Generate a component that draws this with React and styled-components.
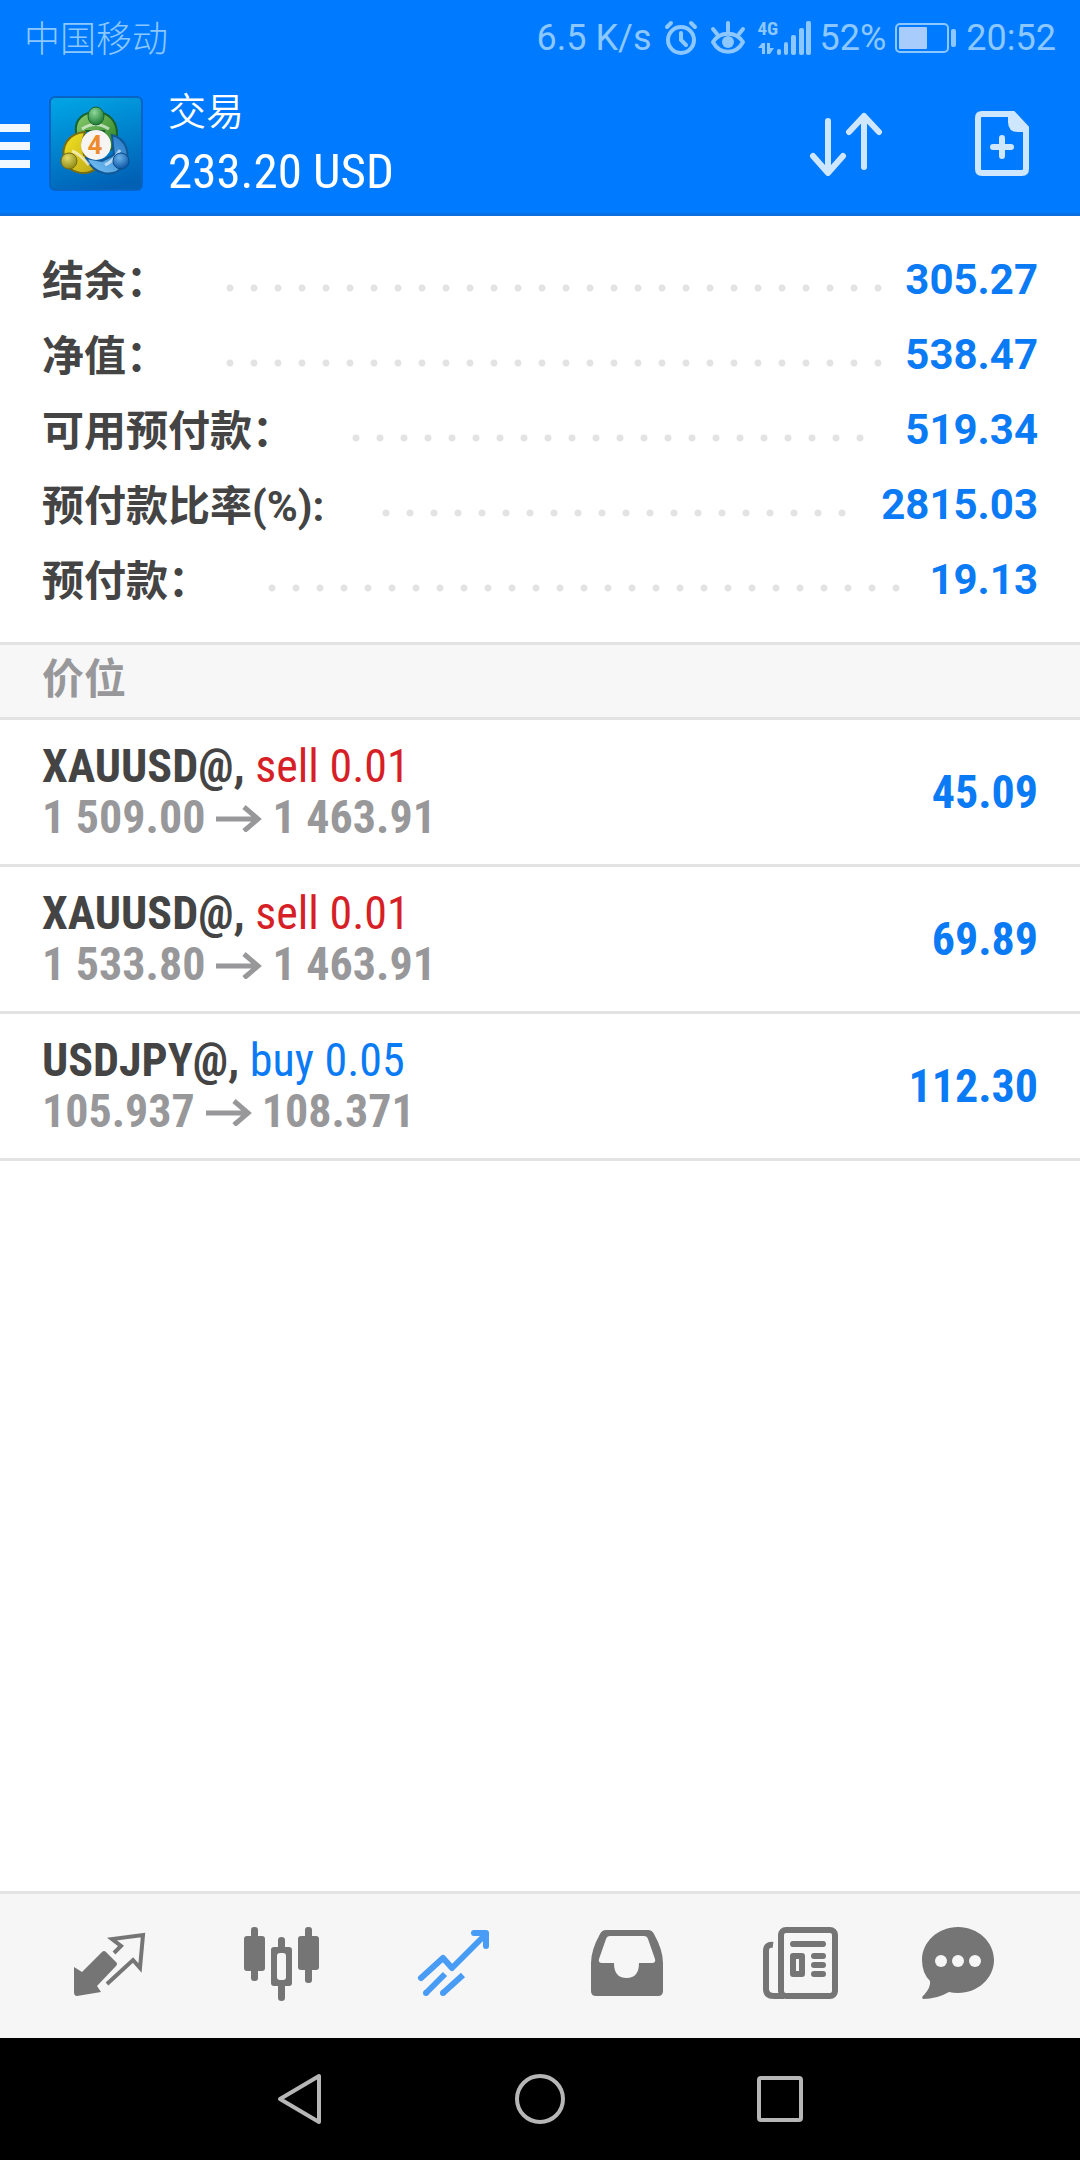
import React from "react";
import styled, { createGlobalStyle } from "styled-components";

const GlobalStyle = createGlobalStyle`
  * {
    box-sizing: border-box;
  }
  body {
    margin: 0;
    background: #fff;
    font-family: Roboto, "Noto Sans CJK SC", sans-serif;
  }
  button {
    padding: 0;
    border: 0;
    background: transparent;
    font: inherit;
    color: inherit;
    cursor: pointer;
  }
  svg {
    display: block;
    flex: none;
  }
`;

const condensed = `"Roboto Condensed", "Liberation Sans Narrow", Roboto, "Noto Sans CJK SC", sans-serif`;

const Screen = styled.div`
  display: flex;
  flex-direction: column;
  min-height: 100vh;
`;

const Header = styled.header`
  background: #007aff;
  border-bottom: 3px solid #0a6fdf;
`;

const StatusBar = styled.div`
  display: flex;
  align-items: center;
  justify-content: space-between;
  height: 72px;
  padding: 0 24px;
  color: #8cc8ff;
  font-size: 36px;
`;

const Carrier = styled.span`
  font-family: "Noto Sans CJK SC", sans-serif;
  font-size: 36px;
  font-weight: 300;
`;

const StatusItems = styled.div`
  display: flex;
  align-items: center;
  gap: 12px;
  padding-top: 3px;
`;

const Tight = styled.div`
  display: flex;
  align-items: center;
  gap: 9px;
`;

const Network = styled.div`
  display: flex;
`;

const NetworkType = styled.div`
  display: flex;
  flex-direction: column;
  justify-content: space-between;
  width: 19px;
  height: 36px;
  font-family: ${condensed};
  font-size: 19px;
  font-weight: 700;
  line-height: 18px;
`;

const TopBar = styled.div`
  display: flex;
  align-items: center;
  height: 141px;
  padding-right: 50px;
`;

const MenuButton = styled.button`
  display: flex;
  flex-direction: column;
  gap: 10px;
  width: 30px;
  margin-right: 18px;
  padding-top: 6px;
  span {
    height: 8px;
    background: #f2f8ff;
  }
`;

const Heading = styled.div`
  flex: 1;
  padding-left: 24px;
  color: #fff;
`;

const Title = styled.h1`
  margin: 0 0 6px;
  font-family: "Noto Sans CJK SC", sans-serif;
  font-size: 38px;
  font-weight: 350;
  line-height: 52px;
`;

const Profit = styled.div`
  font-family: ${condensed};
  font-size: 49px;
  line-height: 62px;
`;

const Actions = styled.div`
  display: flex;
  align-items: center;
  gap: 90px;
`;

const Summary = styled.dl`
  margin: 0;
  padding: 26px 42px 25px;
`;

const SummaryRow = styled.div`
  display: flex;
  align-items: center;
  height: 75px;
  font-size: 42px;
  font-weight: 700;
  dt {
    padding-bottom: 5px;
    color: #444;
  }
  dd {
    margin: 0;
    color: #0a7af5;
  }
`;

/* whole 24px tiles only, so that no dot is cut at the right end */
const Leader = styled.span`
  flex: 1;
  margin: 16px 12px 0 50px;
  &::before {
    content: "";
    display: block;
    width: round(down, 100%, 24px);
    height: 8px;
    background: radial-gradient(circle, #e3e3e3 3px, transparent 4px) 0 0 / 24px 8px;
  }
`;

const SectionTitle = styled.h2`
  height: 78px;
  margin: 0;
  padding: 0 42px;
  border-top: 3px solid #e3e3e3;
  border-bottom: 3px solid #e3e3e3;
  background: #f7f7f8;
  color: #98989b;
  font-size: 42px;
  font-weight: 700;
  line-height: 70px;
`;

const Positions = styled.ul`
  flex: 1;
  margin: 0;
  padding: 0;
  list-style: none;
`;

const Position = styled.li`
  display: flex;
  align-items: center;
  justify-content: space-between;
  height: 147px;
  padding: 0 42px;
  border-bottom: 3px solid #e3e3e3;
  font-family: ${condensed};
  font-size: 46px;
  font-weight: 700;
  line-height: 51px;
`;

const Symbol = styled.div`
  color: #444;
`;

const Side = styled.span`
  color: ${(props) => (props.$buy ? "#0a7af5" : "#d61f26")};
  font-weight: 400;
`;

const Prices = styled.div`
  display: flex;
  align-items: center;
  gap: 10px;
  color: #98989b;
`;

const Result = styled.div`
  color: #0a7af5;
`;

const TabBar = styled.nav`
  display: grid;
  grid-template-columns: repeat(5, 172fr) 148fr;
  height: 147px;
  padding: 0 48px 0 24px;
  border-top: 3px solid #e3e3e3;
  background: #f6f6f6;
`;

const Tab = styled.button`
  display: flex;
  align-items: center;
  justify-content: center;
  color: ${(props) => (props.$active ? "#489cf5" : "#757575")};
`;

const SystemBar = styled.div`
  display: grid;
  grid-template-columns: repeat(3, 240px);
  justify-content: center;
  height: 122px;
  background: #000;
  color: #b6b6b6;
  button {
    display: flex;
    align-items: center;
    justify-content: center;
  }
`;

const summary = [
  ["结余：", "305.27"],
  ["净值：", "538.47"],
  ["可用预付款：", "519.34"],
  ["预付款比率(%):", "2815.03"],
  ["预付款：", "19.13"],
];

const positions = [
  { symbol: "XAUUSD@", side: "sell", volume: "0.01", open: "1 509.00", now: "1 463.91", result: "45.09" },
  { symbol: "XAUUSD@", side: "sell", volume: "0.01", open: "1 533.80", now: "1 463.91", result: "69.89" },
  { symbol: "USDJPY@", side: "buy", volume: "0.05", open: "105.937", now: "108.371", result: "112.30" },
];

const AlarmIcon = () => (
  <svg width="34" height="36" viewBox="0 0 34 36" fill="none" stroke="currentColor" strokeWidth="4" strokeLinecap="round">
    <circle cx="17" cy="20" r="13" />
    <path d="M17 13v7l5 5M3 7l4-4M31 7l-4-4" />
  </svg>
);

const EyeIcon = () => (
  <svg width="36" height="36" viewBox="0 0 36 36" fill="none" stroke="currentColor" strokeWidth="4" strokeLinecap="round" strokeLinejoin="round">
    <path d="M3 22C10 11 26 11 33 22 26 35 10 35 3 22z" />
    <path d="M18 3v8M3 9l4 5M33 9l-4 5" />
    <circle cx="18" cy="22" r="6" fill="currentColor" stroke="none" />
  </svg>
);

const SignalIcon = () => (
  <svg width="34" height="36" viewBox="0 0 34 36" fill="currentColor">
    <rect x="0" y="29" width="4" height="6" rx="2" />
    <rect x="7" y="22" width="4" height="13" rx="2" />
    <rect x="14" y="15" width="5" height="20" rx="2" />
    <rect x="22" y="8" width="5" height="27" rx="2" />
    <rect x="29" y="1" width="5" height="34" rx="2" />
  </svg>
);

const TransferIcon = () => (
  <svg width="17" height="14" viewBox="0 0 17 14" fill="currentColor">
    <path d="M0 6 4 1h3v11H4V6zM9 1h3v5h4l-4 6H9z" />
  </svg>
);

const BatteryIcon = () => (
  <svg width="62" height="30" viewBox="0 0 62 30">
    <rect x="1" y="1" width="52" height="28" rx="4" fill="none" stroke="currentColor" strokeWidth="2" />
    <rect x="4" y="4" width="28" height="22" rx="1" fill="#a8ccfb" />
    <rect x="56" y="6" width="5" height="18" rx="2" fill="currentColor" />
  </svg>
);

const AppLogo = () => (
  <svg width="96" height="96" viewBox="0 0 96 96">
    <defs>
      <linearGradient id="tile" x1="0.3" y1="0" x2="0.6" y2="1">
        <stop offset="0" stopColor="#00a2e4" />
        <stop offset="1" stopColor="#0060b4" />
      </linearGradient>
      <linearGradient id="green" x1="0" y1="0" x2="1" y2="1">
        <stop offset="0" stopColor="#8fd070" />
        <stop offset="1" stopColor="#237a22" />
      </linearGradient>
      <linearGradient id="yellow" x1="0" y1="0" x2="1" y2="1">
        <stop offset="0" stopColor="#f5e420" />
        <stop offset="1" stopColor="#b9a51a" />
      </linearGradient>
      <linearGradient id="blue" x1="0" y1="1" x2="1" y2="0">
        <stop offset="0" stopColor="#7cc6f7" />
        <stop offset="1" stopColor="#2277c4" />
      </linearGradient>
      <radialGradient id="greenHead" cx="0.4" cy="0.3" r="0.7">
        <stop offset="0" stopColor="#8fd79a" />
        <stop offset="1" stopColor="#1d7c34" />
      </radialGradient>
      <radialGradient id="yellowHead" cx="0.4" cy="0.3" r="0.7">
        <stop offset="0" stopColor="#e4dc6a" />
        <stop offset="1" stopColor="#8f8a16" />
      </radialGradient>
      <radialGradient id="blueHead" cx="0.4" cy="0.3" r="0.7">
        <stop offset="0" stopColor="#6db4ea" />
        <stop offset="1" stopColor="#0c57a5" />
      </radialGradient>
    </defs>
    <rect x="2" y="2" width="92" height="93" rx="5" fill="url(#tile)" stroke="#0763c4" strokeWidth="2" />
    <path d="M28 38C26 24 36 17 48 17S70 26 69 41C68 52 64 55 60 56L56 36H38L32 46C29 44 28 41 28 38z" fill="url(#green)" stroke="#17622b" strokeWidth="2" />
    <path d="M37 37C20 38 12 52 17 66 21 78 38 82 49 73L52 67 36 60 34 48z" fill="url(#yellow)" stroke="#776d12" strokeWidth="2" />
    <path d="M64 40C79 44 83 60 76 70 66 84 46 80 38 63L54 66 66 60 65 50z" fill="url(#blue)" stroke="#125896" strokeWidth="2" />
    <path d="M34 34Q47 25 61 34M24 56Q31 58 41 70M57 70Q66 66 72 55" fill="none" stroke="#fff" strokeOpacity="0.6" strokeWidth="3" />
    <ellipse cx="48" cy="21" rx="8" ry="9" fill="url(#greenHead)" stroke="#17622b" />
    <circle cx="21" cy="66" r="8" fill="url(#yellowHead)" stroke="#776d12" />
    <circle cx="73" cy="66" r="8" fill="url(#blueHead)" stroke="#0c4c8c" />
    <circle cx="48" cy="50" r="15" fill="#f7f4f4" />
    <text x="47" y="59" textAnchor="middle" fontFamily="Roboto, sans-serif" fontSize="26" fontWeight="700" fill="#ee8b2c">
      4
    </text>
  </svg>
);

const SortIcon = () => (
  <svg width="76" height="66" viewBox="0 0 76 66" fill="none" stroke="#cfe6ff" strokeWidth="6" strokeLinecap="round" strokeLinejoin="round">
    <path d="M20 11v50M5 46l15 17 15-17M56 57V6M41 22 56 6l15 16" />
  </svg>
);

const NewOrderIcon = () => (
  <svg width="56" height="68" viewBox="0 0 56 68" fill="none" stroke="#cfe6ff">
    <path d="M8 5h31l13 14v41q0 4-4 4H8q-4 0-4-4V9q0-4 4-4z" strokeWidth="6" />
    <path d="M34 6v7q0 10 10 10h9v-6L40 4z" fill="#cfe6ff" stroke="none" />
    <path d="M28 29v18M19 38h18" strokeWidth="6" strokeLinecap="round" />
  </svg>
);

const ArrowIcon = () => (
  <svg width="47" height="28" viewBox="0 0 47 28" fill="none" stroke="currentColor" strokeWidth="5">
    <path d="M1 15h42M29 3l14 12-14 12" />
  </svg>
);

const QuotesIcon = () => (
  <svg width="84" height="84" viewBox="0 0 84 84">
    <path d="M6 43l8 5 20-20q2-2 4 0l10 10q2 2 0 4L29 62l4 6-24 4q-3 0-3-4z" fill="currentColor" />
    <path d="M46 29l7-7-9-7 31-4-3 33-7-8-26 24" fill="none" stroke="currentColor" strokeWidth="4" />
  </svg>
);

const ChartIcon = () => (
  <svg width="84" height="84" viewBox="1 2 84 84" fill="currentColor">
    <rect x="12" y="5" width="7" height="54" rx="3" />
    <rect x="5" y="14" width="21" height="35" rx="3" />
    <rect x="66" y="5" width="7" height="56" rx="3" />
    <rect x="59" y="14" width="21" height="34" rx="3" />
    <path fillRule="evenodd" d="M39 18q0-3 3.500-3t3.500 3v7h4q3 0 3 3v33q0 3-3 3h-4v12q0 3-3.500 3t-3.500-3V64h-4q-3 0-3-3V28q0-3 3-3h4zM41 31q-3 0-3 3v21q0 3 3 3h3q3 0 3-3V34q0-3-3-3z" />
  </svg>
);

const TradeIcon = () => (
  <svg width="84" height="84" viewBox="0 2 84 84" fill="none" stroke="currentColor" strokeWidth="6">
    <path d="M9 56 31 36l9 10 34-34M62 11h12v13" strokeLinecap="round" strokeLinejoin="round" />
    <path d="M14 71 33 52M31 71l20-18" />
    <circle cx="14" cy="71" r="3" fill="currentColor" stroke="none" />
    <circle cx="31" cy="71" r="3" fill="currentColor" stroke="none" />
  </svg>
);

const HistoryIcon = () => (
  <svg width="84" height="84" viewBox="-1 2 84 84" fill="currentColor">
    <path fillRule="evenodd" d="M21 8h42q4 0 6 4 9 16 9 29v28q0 5-5 5H11q-5 0-5-5V41q0-13 9-29 2-4 6-4zM25 14q-3 0-4 3l-7 20q-1 4 3 4h12q0 15 12.500 15T54 41h13q4 0 3-4l-7-20q-1-3-4-3z" />
  </svg>
);

const NewsIcon = () => (
  <svg width="84" height="84" viewBox="-2 2 84 84" fill="none" stroke="currentColor" strokeWidth="6">
    <rect x="23" y="8" width="54" height="66" rx="5" />
    <path d="M15 23q-7-1-7 6v38q0 7 8 7h10" />
    <path d="M35 22h30M56 34h9M56 43h9M56 52h9" strokeLinecap="round" />
    <rect x="35" y="34" width="9" height="18" strokeLinejoin="round" />
  </svg>
);

const ChatIcon = () => (
  <svg width="84" height="84" viewBox="0 2 84 84">
    <path d="M42 5c20 0 36 15 36 33S62 71 42 71q-5 0-9-1-12 7-26 7-2-2 1-4 7-8 6-14-8-8-8-21C6 20 22 5 42 5z" fill="currentColor" />
    <g fill="#f6f6f6">
      <circle cx="25" cy="39" r="6" />
      <circle cx="42" cy="39" r="6" />
      <circle cx="59" cy="39" r="6" />
    </g>
  </svg>
);

const App = () => {
  return (
    <Screen>
      <GlobalStyle />
      <Header>
        <StatusBar>
          <Carrier>中国移动</Carrier>
          <StatusItems>
            <span>6.5 K/s</span>
            <AlarmIcon />
            <EyeIcon />
            <Tight>
              <Network>
                <NetworkType>
                  4G
                  <TransferIcon />
                </NetworkType>
                <SignalIcon />
              </Network>
              <span>52%</span>
              <BatteryIcon />
              <span>20:52</span>
            </Tight>
          </StatusItems>
        </StatusBar>
        <TopBar>
          <MenuButton aria-label="菜单">
            <span />
            <span />
            <span />
          </MenuButton>
          <AppLogo />
          <Heading>
            <Title>交易</Title>
            <Profit>233.20 USD</Profit>
          </Heading>
          <Actions>
            <button aria-label="排序">
              <SortIcon />
            </button>
            <button aria-label="新订单">
              <NewOrderIcon />
            </button>
          </Actions>
        </TopBar>
      </Header>
      <Summary>
        {summary.map(([label, value]) => (
          <SummaryRow key={label}>
            <dt>{label}</dt>
            <Leader />
            <dd>{value}</dd>
          </SummaryRow>
        ))}
      </Summary>
      <SectionTitle>价位</SectionTitle>
      <Positions>
        {positions.map((p) => (
          <Position key={p.open}>
            <div>
              <Symbol>
                {p.symbol},{" "}
                <Side $buy={p.side === "buy"}>
                  {p.side} {p.volume}
                </Side>
              </Symbol>
              <Prices>
                <span>{p.open}</span>
                <ArrowIcon />
                <span>{p.now}</span>
              </Prices>
            </div>
            <Result>{p.result}</Result>
          </Position>
        ))}
      </Positions>
      <TabBar>
        <Tab aria-label="行情">
          <QuotesIcon />
        </Tab>
        <Tab aria-label="图表">
          <ChartIcon />
        </Tab>
        <Tab aria-label="交易" $active>
          <TradeIcon />
        </Tab>
        <Tab aria-label="历史">
          <HistoryIcon />
        </Tab>
        <Tab aria-label="新闻">
          <NewsIcon />
        </Tab>
        <Tab aria-label="消息">
          <ChatIcon />
        </Tab>
      </TabBar>
      <SystemBar>
        <button aria-label="返回">
          <svg width="52" height="52" viewBox="0 0 52 52" fill="none" stroke="currentColor" strokeWidth="4" strokeLinejoin="round">
            <path d="M45 3v46L6 26z" />
          </svg>
        </button>
        <button aria-label="主屏幕">
          <svg width="52" height="52" viewBox="0 0 52 52" fill="none" stroke="currentColor" strokeWidth="4">
            <circle cx="26" cy="26" r="23" />
          </svg>
        </button>
        <button aria-label="最近任务">
          <svg width="52" height="52" viewBox="0 0 52 52" fill="none" stroke="currentColor" strokeWidth="4">
            <rect x="5" y="5" width="42" height="42" rx="2" />
          </svg>
        </button>
      </SystemBar>
    </Screen>
  );
};

export default App;
